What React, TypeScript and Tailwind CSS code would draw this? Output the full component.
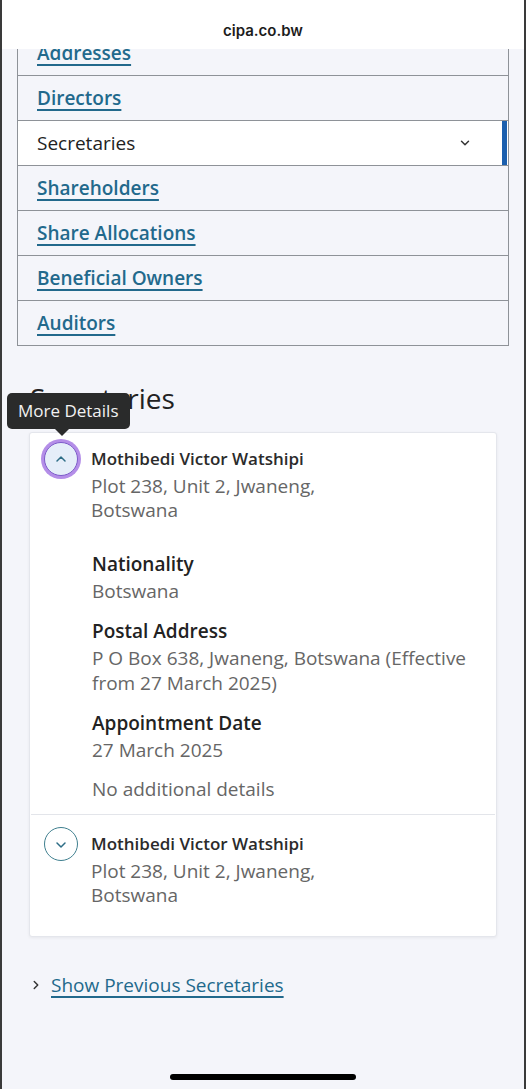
import React from 'react';
import { ChevronDown, ChevronUp, ChevronRight } from 'lucide-react';

const font = { fontFamily: '"Open Sans", "Noto Sans", sans-serif' };

function NavRow({ label, active, clipped }: { label: string; active?: boolean; clipped?: boolean }) {
  if (active) {
    return (
      <div className="relative flex h-[45px] items-center justify-between border-b border-[#8e9298] bg-white pl-[19px] pr-[36px]">
        <span className="text-[19px] text-[#222]">{label}</span>
        <ChevronDown size={14} strokeWidth={2.5} className="text-[#333]" />
        <span className="absolute right-[1px] top-0 h-full w-[5px] bg-[#1b5fae]" />
      </div>
    );
  }
  return (
    <div
      className={`flex h-[45px] items-center border-b border-[#8e9298] bg-[#f4f5fa] pl-[19px] ${clipped ? 'pt-[1px]' : ''}`}
    >
      <a className="text-[19px] font-semibold text-[#22698c] underline decoration-[1.5px] underline-offset-[4px]">
        {label}
      </a>
    </div>
  );
}

function Person({ open }: { open?: boolean }) {
  return (
    <div className="flex gap-[13px]">
      <div className="relative shrink-0">
        {open ? (
          <>
            <div className="flex h-[34px] w-[34px] items-center justify-center rounded-full border-[1.5px] border-[#7d5bc9] bg-[#e5eef9] ring-[3px] ring-[#b48ee8]">
              <ChevronUp size={16} strokeWidth={2.25} className="text-[#2d6d86]" />
            </div>
            <div className="absolute bottom-[calc(100%+6px)] left-[-37px] z-20">
              <div className="whitespace-nowrap rounded-[5px] bg-[#2a2b2b] px-[11px] py-[6px] text-[17px] leading-[24px] text-[#f2f2f2]">
                More Details
              </div>
              <div className="ml-[48px] h-0 w-0 border-x-[7px] border-t-[7px] border-x-transparent border-t-[#2a2b2b]" />
            </div>
          </>
        ) : (
          <div className="flex h-[34px] w-[34px] items-center justify-center rounded-full border-[1.5px] border-[#3f7f8f] bg-white pt-[2px]">
            <ChevronDown size={16} strokeWidth={2.25} className="text-[#2d6d86]" />
          </div>
        )}
      </div>
      <div className="mt-[5px]">
        <div className="text-[17px] font-semibold leading-[24px] text-[#2b2b2b]">Mothibedi Victor Watshipi</div>
        <div className="mt-[3px] text-[19px] leading-[24px] text-[#666]">
          Plot 238, Unit 2, Jwaneng,
          <br />
          Botswana
        </div>
      </div>
    </div>
  );
}

function Detail({ label, children }: { label: string; children: React.ReactNode }) {
  return (
    <div>
      <div className="text-[19px] font-semibold leading-[26px] text-[#222]">{label}</div>
      <div className="mt-[2px] text-[19px] leading-[25px] text-[#666]">{children}</div>
    </div>
  );
}

export default function App() {
  return (
    <div
      style={font}
      className="flex min-h-[1089px] w-[526px] flex-col overflow-hidden border-x-2 border-[#3a3a3a] bg-[#f4f5fa]"
    >
      <div className="relative z-10 flex h-[49px] items-end justify-center bg-white pb-[7px]">
        <span className="text-[15px] font-semibold text-[#1c1c1c]" style={{ fontFamily: 'Inter, sans-serif' }}>
          cipa.co.bw
        </span>
      </div>

      <div className="mx-[15px] -mt-[19px] border-x border-t border-[#8e9298]">
        <NavRow label="Addresses" clipped />
        <NavRow label="Directors" />
        <NavRow label="Secretaries" active />
        <NavRow label="Shareholders" />
        <NavRow label="Share Allocations" />
        <NavRow label="Beneficial Owners" />
        <NavRow label="Auditors" />
      </div>

      <h2 className="ml-[28px] mt-[35px] text-[28px] font-medium leading-[34px] text-[#222]">Secretaries</h2>

      <div className="mx-[27px] mt-[17px] rounded-[3px] border border-[#e4e6ec] bg-white shadow-[0_1px_3px_rgba(0,0,0,0.06)]">
        <div className="px-[14px] pt-[9px] pb-[12px]">
          <Person open />
          <div className="ml-[48px] mt-[29px] flex flex-col gap-[14px]">
            <Detail label="Nationality">Botswana</Detail>
            <Detail label="Postal Address">
              P O Box 638, Jwaneng, Botswana (Effective
              <br />
              from 27 March 2025)
            </Detail>
            <Detail label="Appointment Date">27 March 2025</Detail>
            <div className="text-[19px] leading-[25px] text-[#666]">No additional details</div>
          </div>
        </div>
        <div className="mx-[1px] h-px bg-[#e3e5ea]" />
        <div className="px-[14px] pt-[12px] pb-[29px]">
          <Person />
        </div>
      </div>

      <div className="ml-[27px] mt-[35px] flex items-center gap-[8px]">
        <ChevronRight size={14} strokeWidth={2.5} className="text-[#333]" />
        <a className="text-[19px] leading-[26px] text-[#22698c] underline decoration-[1.5px] underline-offset-[4px]">
          Show Previous Secretaries
        </a>
      </div>

      <div className="mb-[9px] mt-auto flex justify-center">
        <div className="h-[6px] w-[186px] rounded-full bg-black" />
      </div>
    </div>
  );
}
